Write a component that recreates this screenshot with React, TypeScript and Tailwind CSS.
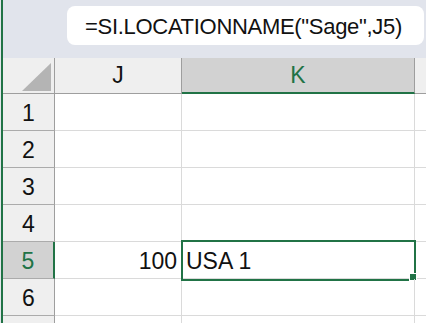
import React from "react";

const font = { fontFamily: '"Liberation Sans", Arial, sans-serif' };

export default function App() {
  const rows = [1, 2, 3, 4, 5, 6, 7];
  return (
    <div className="flex h-[323px] w-[426px] overflow-hidden bg-white" style={font}>
      <div className="w-[1px] shrink-0 bg-[#e4e6ec]" />
      <div className="w-[2px] shrink-0 bg-[#217346]" />
      <div className="flex min-w-0 flex-1 flex-col">
        <div className="h-[58px] shrink-0 bg-[#e1e4ec] pl-[64px] pr-[2px] pt-[6px]">
          <div className="flex h-[39px] items-center rounded-[8px] bg-white pl-[18px] pt-[2px] text-[22px] text-[#111] whitespace-nowrap tracking-[-0.3px]">
            =SI.LOCATIONNAME("Sage",J5)
          </div>
        </div>
        <div className="flex h-[36px] shrink-0">
          <div className="relative w-[52px] shrink-0 border-b border-r border-[#9e9e9e] bg-[#efefef]">
            <svg className="absolute left-0 top-0" width="52" height="36">
              <polygon points="48,5 48,33 19,33" fill="#b4b4b4" />
            </svg>
          </div>
          <div className="flex w-[127px] shrink-0 items-center justify-center border-b border-r border-[#9e9e9e] bg-[#efefef] text-[23px] text-[#111]">
            J
          </div>
          <div className="flex w-[233px] shrink-0 items-center justify-center border-b-2 border-r border-b-[#217346] border-r-[#9e9e9e] bg-[#d2d2d2] text-[23px] text-[#217346]">
            K
          </div>
          <div className="flex-1 border-b border-[#9e9e9e] bg-[#efefef]" />
        </div>
        {rows.map((r) => {
          const sel = r === 5;
          return (
            <div key={r} className="flex h-[37px] shrink-0">
              <div
                className={
                  sel
                    ? "flex w-[52px] shrink-0 items-center justify-center border-b border-r-2 border-b-[#ababab] border-r-[#217346] bg-[#d2d2d2] pt-[3px] text-[23px] text-[#217346]"
                    : "flex w-[52px] shrink-0 items-center justify-center border-b border-r border-b-[#ababab] border-r-[#9e9e9e] bg-[#efefef] pt-[3px] text-[23px] text-[#111]"
                }
              >
                {r < 7 ? r : ""}
              </div>
              <div className="flex w-[127px] shrink-0 items-center justify-end border-b border-r border-[#dadada] pr-[4px] pt-[3px] text-[23px] text-[#111]">
                {sel ? "100" : ""}
              </div>
              <div className="relative flex w-[233px] shrink-0 items-center border-b border-r border-[#dadada] pl-[4px] pt-[3px] text-[23px] text-[#111]">
                {sel ? "USA 1" : ""}
                {sel && (
                  <>
                    <div className="pointer-events-none absolute left-[-1px] top-[-2px] h-[41px] w-[235px] border-2 border-[#217346]" />
                    <div className="absolute left-[227px] top-[31px] h-[8px] w-[8px] border border-white bg-[#217346]" />
                  </>
                )}
              </div>
              <div className="flex-1 border-b border-[#dadada]" />
            </div>
          );
        })}
      </div>
    </div>
  );
}
